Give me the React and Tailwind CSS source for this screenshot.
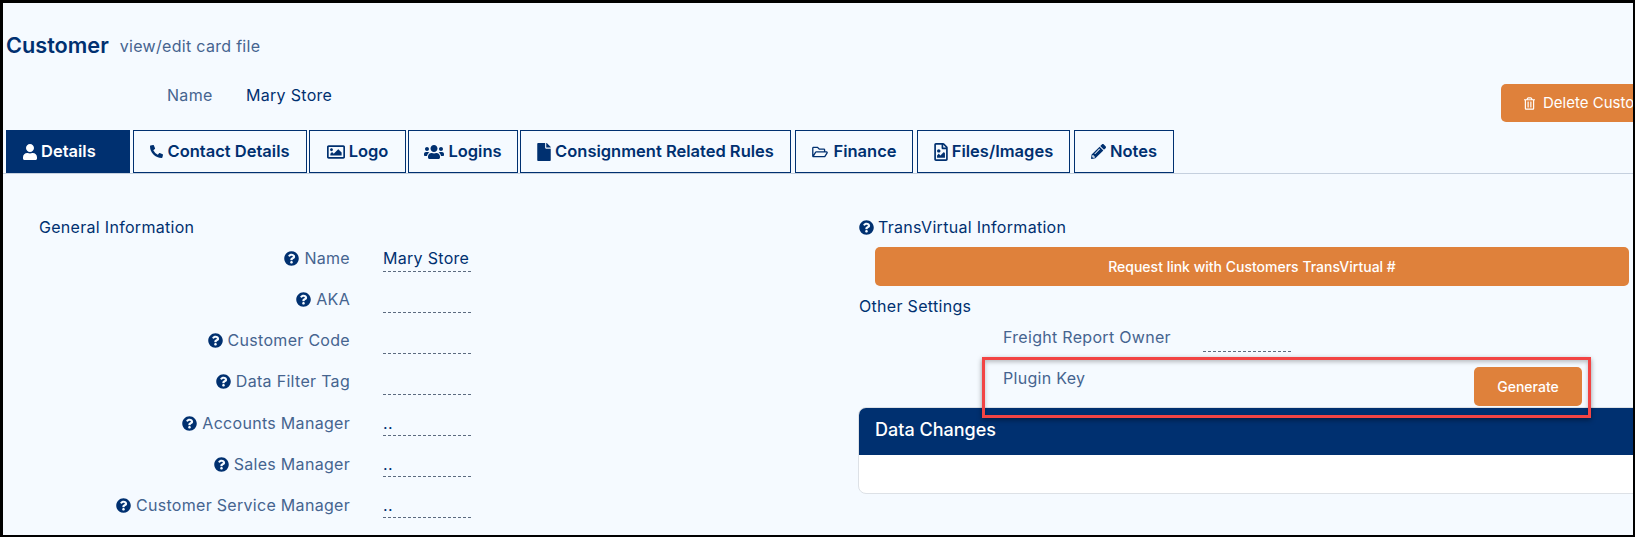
import React from 'react';
import {
  FaUser, FaPhoneAlt, FaRegImage, FaUsers, FaFile, FaRegFolderOpen,
  FaRegFileImage, FaPencilAlt, FaQuestionCircle, FaRegTrashAlt,
} from 'react-icons/fa';

const tabs = [
  { label: 'Contact Details', icon: FaPhoneAlt, box: 'ml-[3px] w-[174px]', iconSize: 'h-[13px] w-[13px]' },
  { label: 'Logo', icon: FaRegImage, box: 'ml-[2px] w-[97px]', iconSize: 'h-[18px] w-[18px]' },
  { label: 'Logins', icon: FaUsers, box: 'ml-[2px] w-[110px]', iconSize: 'h-[16px] w-[20px]' },
  { label: 'Consignment Related Rules', icon: FaFile, box: 'ml-[2px] w-[271px]', iconSize: 'h-[18px] w-[14px]' },
  { label: 'Finance', icon: FaRegFolderOpen, box: 'ml-[4px] w-[118px]', iconSize: 'h-[14px] w-[18px]' },
  { label: 'Files/Images', icon: FaRegFileImage, box: 'ml-[4px] w-[153px]', iconSize: 'h-[18px] w-[14px]' },
  { label: 'Notes', icon: FaPencilAlt, box: 'ml-[4px] w-[100px]', iconSize: 'h-[15px] w-[15px]' },
];

const fields = [
  { label: 'Name', value: 'Mary Store', offset: 'pt-[11px]' },
  { label: 'AKA', value: '', offset: 'pt-[11px]' },
  { label: 'Customer Code', value: '', offset: 'pt-[11px]' },
  { label: 'Data Filter Tag', value: '', offset: 'pt-[11px]' },
  { label: 'Accounts Manager', value: '..', offset: 'pt-[12px]' },
  { label: 'Sales Manager', value: '..', offset: 'pt-[12px]' },
  { label: 'Customer Service Manager', value: '..', offset: 'pt-[12px]' },
];

const Tab = ({ tab }) => {
  const Icon = tab.icon;
  return (
    <div className={`flex h-[43px] ${tab.box} items-center justify-center gap-[4px] border border-[#003070] text-[16.5px] font-semibold tracking-normal text-[#003070]`}>
      <Icon className={`${tab.iconSize} shrink-0`} />
      <span>{tab.label}</span>
    </div>
  );
};

const App = () => {
  return (
    <div className="relative h-[537px] w-[1635px] overflow-hidden border-t-[3px] border-r-[2px] border-b-[2px] border-l-[3px] border-black bg-[#f5faff] font-['Inter',sans-serif] text-[16px] tracking-[0.3px] text-[#45648f]">
      <div className="flex h-[69px] items-baseline gap-[11px] pt-[28px] pl-[3px]">
        <h1 className="text-[21.7px] leading-[28px] font-semibold tracking-normal text-[#003070]">Customer</h1>
        <span className="-translate-y-px">view/edit card file</span>
      </div>

      <div className="flex h-[58px] items-start">
        <div className="flex pt-[11px] pl-[164px] leading-[24px]">
          <span className="w-[79px]">Name</span>
          <span className="text-[#003070]">Mary Store</span>
        </div>
        <button className="mt-[12px] mr-[-59px] ml-auto flex h-[38px] w-[191px] shrink-0 items-center gap-[8px] rounded-[5px] bg-[#df813b] pl-[23px] text-[15px] tracking-normal whitespace-nowrap text-white">
          <FaRegTrashAlt className="h-[13px] w-[11px]" />
          <span>Delete Customer</span>
        </button>
      </div>

      <div className="flex h-[44px] border-b border-[#c5d0de] pl-[3px]">
        <div className="flex h-[43px] w-[124px] items-center gap-[4px] bg-[#003070] pl-[17px] text-[16.5px] font-semibold tracking-normal text-white">
          <FaUser className="h-[16px] w-[14px]" />
          <span>Details</span>
        </div>
        {tabs.map((tab) => (
          <Tab key={tab.label} tab={tab} />
        ))}
      </div>

      <div className="flex">
        <div className="w-[856px] shrink-0 pt-[45px]">
          <div className="h-[16px] pl-[36px] leading-[16px] text-[#003070]">General Information</div>
          <div className="flex flex-col gap-y-[4.08px]">
            {fields.map((field) => (
              <div key={field.label} className="flex h-[37px]">
                <div className={`flex w-[347px] items-center justify-end gap-[5px] self-start ${field.offset} leading-[24px]`}>
                  <FaQuestionCircle className="h-[15px] w-[15px] text-[#003070]" />
                  <span>{field.label}</span>
                </div>
                <div className={`ml-[33px] w-[88px] border-b border-dashed border-[#5c6b80] ${field.offset} leading-[24px] text-[#003070]`}>
                  {field.value}
                </div>
              </div>
            ))}
          </div>
        </div>

        <div className="min-w-0 flex-1 pt-[45px]">
          <div className="flex h-[16px] items-center gap-[4px] leading-[16px] text-[#003070]">
            <FaQuestionCircle className="h-[15px] w-[15px]" />
            <span>TransVirtual Information</span>
          </div>
          <button className="mt-[12px] ml-[16px] h-[39px] w-[754px] rounded-[5px] bg-[#df813b] text-[14px] font-medium tracking-normal text-white">
            Request link with Customers TransVirtual #
          </button>
          <div className="mt-[12px] leading-[16px] text-[#003070]">Other Settings</div>
          <div className="flex h-[38px] pl-[144px]">
            <span className="w-[200px] pt-[11px] leading-[24px]">Freight Report Owner</span>
            <div className="w-[88px] border-b border-dashed border-[#5c6b80]"></div>
          </div>
          <div className="flex items-start pt-[15px] pl-[144px]">
            <span className="-mt-[1px] leading-[24px]">Plugin Key</span>
            <button className="mr-[51px] ml-auto h-[39px] w-[108px] rounded-[5px] bg-[#df813b] text-[14px] font-medium tracking-normal text-white">
              Generate
            </button>
          </div>
          <div className="mt-[1px] mr-[-20px] -ml-[1px] overflow-hidden rounded-[8px] border border-[#dde1e6] bg-white">
            <div className="flex h-[47px] items-center bg-[#003070] pb-[4px] pl-[16px] text-[18px] font-medium tracking-normal text-white">
              Data Changes
            </div>
            <div className="h-[38px]"></div>
          </div>
        </div>
      </div>

      <div className="absolute top-[354px] left-[979px] h-[61px] w-[609px] border-[3px] border-[#f24444] shadow-[0_2px_5px_rgba(0,0,0,0.4),inset_0_2px_4px_rgba(0,0,0,0.25)]"></div>
    </div>
  );
};

export default App;
